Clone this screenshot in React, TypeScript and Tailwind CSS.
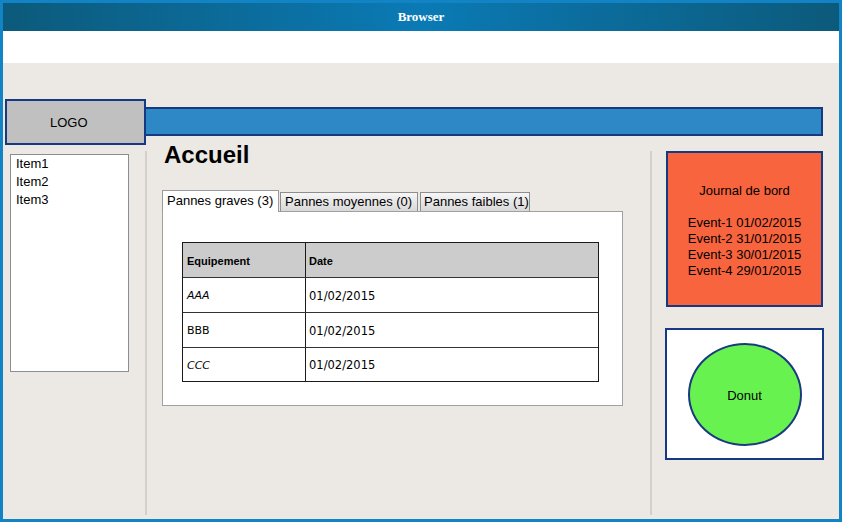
import React from "react";

const sans = { fontFamily: '"Liberation Sans", Arial, sans-serif' };
const dv = { fontFamily: '"DejaVu Sans", "Liberation Sans", sans-serif' };

export default function App() {
  return (
    <div
      className="w-[842px] h-[522px] border-[3px] border-[#1284c6] flex flex-col bg-[#ece8e4] overflow-hidden"
      style={sans}
    >
      {/* title bar */}
      <div className="h-[28px] shrink-0 flex items-center justify-center pb-[2px] bg-gradient-to-r from-[#0c5a7b] via-[#0a7ab5] to-[#0c5a7b]">
        <span
          className="text-white font-bold text-[13px] leading-none"
          style={{ fontFamily: '"Liberation Serif", "Times New Roman", serif' }}
        >
          Browser
        </span>
      </div>
      {/* address area */}
      <div className="h-[32px] shrink-0 bg-white" />
      {/* body */}
      <div className="flex-1 flex flex-col">
        {/* header */}
        <div className="flex items-start pl-[2px] mt-[36px]">
          <div className="relative z-10 w-[141px] h-[46px] bg-[#c0c0c0] border-2 border-[#153a83] flex items-center pl-[43px] pt-[1px] text-[13px] text-black">
            LOGO
          </div>
          <div className="ml-[-2px] mt-[8px] w-[679px] h-[29px] bg-[#2f88c6] border-2 border-[#153a83]" />
        </div>
        {/* columns */}
        <div className="flex mt-[-4px] flex-1">
          {/* left */}
          <div className="w-[142px] pl-[7px] pt-[13px]">
            <div className="w-[119px] h-[218px] bg-white border border-[#8c8c94] pl-[5px] text-[13px] leading-[18px] text-black">
              <div>Item1</div>
              <div>Item2</div>
              <div>Item3</div>
            </div>
          </div>
          <div className="w-[2px] mt-[10px] h-[364px] bg-[#d3cfcb]" />
          {/* main */}
          <div className="w-[503px] pl-[15px]">
            <h1 className="text-[24px] leading-[28px] font-bold text-black pl-[2px]">Accueil</h1>
            <div className="flex items-end gap-[1px] mt-[21px] h-[21px] text-[13px] text-black">
              <div className="relative z-10 w-[117px] h-[22px] mb-[-1px] bg-white border border-b-0 border-[#9a9a9a] pl-[4px] leading-[19px]">
                Pannes graves (3)
              </div>
              <div className="w-[138px] h-[19px] bg-gradient-to-b from-[#f6f6f6] to-[#d8d8d8] border border-b-0 border-[#8e8e8e] pl-[4px] leading-[18px]">
                Pannes moyennes (0)
              </div>
              <div className="ml-[1px] w-[110px] h-[19px] bg-gradient-to-b from-[#f6f6f6] to-[#d8d8d8] border border-b-0 border-[#8e8e8e] pl-[3px] leading-[18px]">
                Pannes faibles (1)
              </div>
            </div>
            <div className="w-[461px] h-[195px] bg-white border border-[#a0a0a0] pl-[19px] pt-[30px]">
              <div className="w-[417px] border border-[#1a1a1a] text-black" style={dv}>
                <div className="flex h-[35px] bg-[#cccccc] border-b border-[#333]">
                  <div className="w-[123px] border-r border-[#1a1a1a] pl-[4px] pt-[3px] flex items-center font-bold text-[11px]" style={sans}>
                    Equipement
                  </div>
                  <div className="flex-1 pl-[3px] pt-[3px] flex items-center font-bold text-[11px]" style={sans}>
                    Date
                  </div>
                </div>
                {[
                  ["AAA", true, 35],
                  ["BBB", false, 35],
                  ["CCC", true, 33],
                ].map(([name, it, h], i) => (
                  <div
                    key={i}
                    className={`flex ${i < 2 ? "border-b border-[#333]" : ""}`}
                    style={{ height: h as number }}
                  >
                    <div
                      className={`w-[123px] border-r border-[#1a1a1a] pl-[4px] pt-[3px] flex items-center text-[11px] ${it ? "italic" : ""}`}
                    >
                      {name as string}
                    </div>
                    <div className="flex-1 pl-[3px] pt-[3px] flex items-center text-[11.5px]">01/02/2015</div>
                  </div>
                ))}
              </div>
            </div>
          </div>
          <div className="w-[2px] mt-[10px] h-[364px] bg-[#d3cfcb]" />
          {/* right */}
          <div className="pl-[14px] pt-[10px] flex flex-col">
            <div className="w-[157px] h-[156px] bg-[#f7643e] border-2 border-[#153a83] flex flex-col items-center justify-center pt-[4px] text-[13px] leading-[16px] text-black">
              <div>Journal de bord</div>
              <div className="h-[16px]" />
              <div>Event-1 01/02/2015</div>
              <div>Event-2 31/01/2015</div>
              <div>Event-3 30/01/2015</div>
              <div>Event-4 29/01/2015</div>
            </div>
            <div className="mt-[21px] ml-[-1px] w-[159px] h-[132px] bg-white border-2 border-[#153a83] flex items-center justify-center">
              <div className="w-[114px] h-[103px] rounded-[50%] bg-[#68f250] border-2 border-[#1a3a80] flex items-center justify-center pt-[3px] text-[13px] text-black">
                Donut
              </div>
            </div>
          </div>
        </div>
      </div>
    </div>
  );
}
